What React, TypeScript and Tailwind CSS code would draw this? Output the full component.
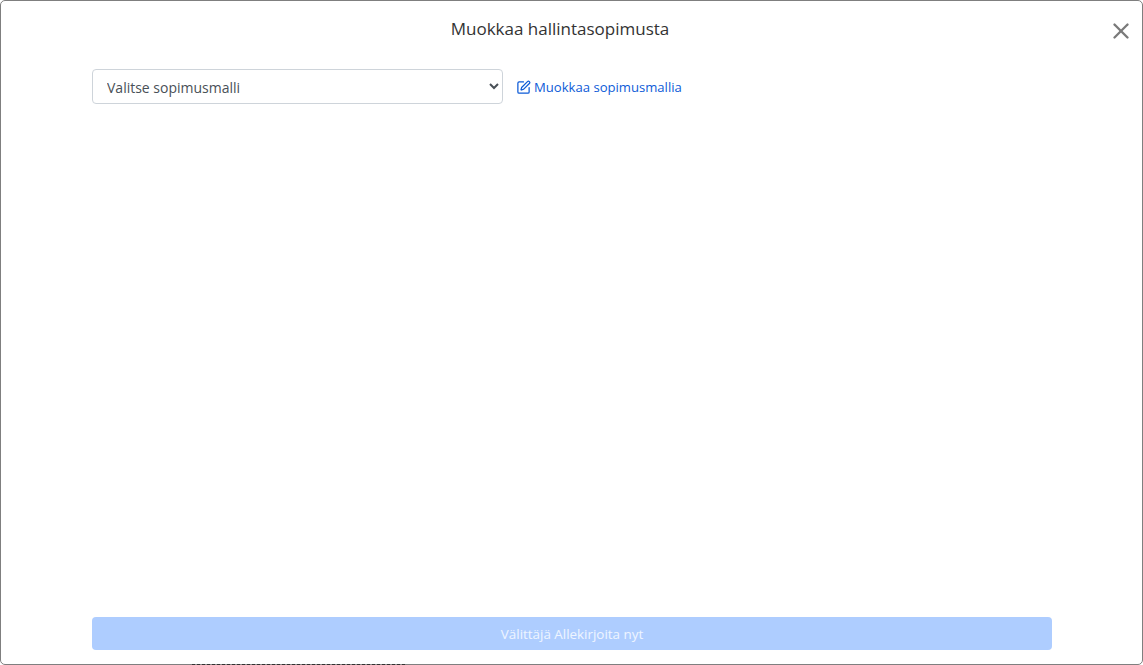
import { SquarePen, X } from "lucide-react";

export default function App() {
  return (
    <div className="relative w-[1143px] h-[665px] overflow-hidden bg-white font-['Open_Sans','Noto_Sans',sans-serif]">
      {/* Modal */}
      <div className="h-full flex flex-col border border-[#7f7f7f] rounded-[5px] bg-white">
        <div className="relative flex justify-center pt-[15px] pr-[23px] h-[68px] shrink-0">
          <h5 className="text-[17px] leading-[26px] text-[#333333]">Muokkaa hallintasopimusta</h5>
          <button className="absolute right-[8px] top-[17px] text-[#7a7a7a]">
            <X size={26} strokeWidth={2.2} />
          </button>
        </div>

        <div className="flex-1 flex flex-col pl-[91px] pr-[90px] pb-[14px]">
          <div className="flex items-center gap-[13px]">
            <select className="w-[411px] h-[35px] pl-[10px] pt-px text-[14px] text-[#495057] border border-[#ced4da] rounded-[4px] bg-white">
              <option>Valitse sopimusmalli</option>
            </select>
            <a className="flex items-center gap-[3px] pt-[2px] text-[13.1px] text-[#0d5bd7]">
              <SquarePen size={15} strokeWidth={2} />
              Muokkaa sopimusmallia
            </a>
          </div>

          <button className="mt-auto h-[33px] pt-px rounded-[4px] bg-[#aecdff] text-[13.4px] text-white/80">
            Välittäjä Allekirjoita nyt
          </button>
        </div>
      </div>

      {/* page text showing through the modal's bottom edge */}
      <div className="absolute left-[192px] bottom-0 w-[213px] h-px bg-[repeating-linear-gradient(90deg,#333333_0,#333333_3px,#8a8a8a_3px,#8a8a8a_5px)]" />
    </div>
  );
}
